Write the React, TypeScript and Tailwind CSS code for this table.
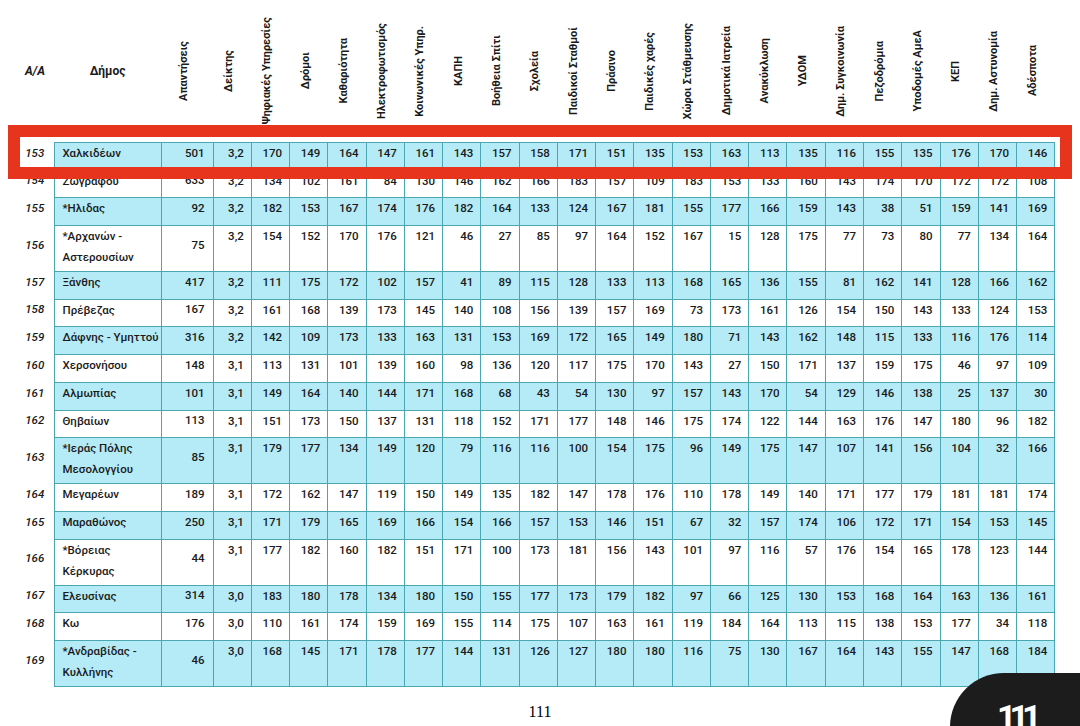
const columns = [
  "Απαντήσεις",
  "Δείκτης",
  "Ψηφιακές Υπηρεσίες",
  "Δρόμοι",
  "Καθαριότητα",
  "Ηλεκτροφωτισμός",
  "Κοινωνικές Υπηρ.",
  "ΚΑΠΗ",
  "Βοήθεια Σπίτι",
  "Σχολεία",
  "Παιδικοί Σταθμοί",
  "Πράσινο",
  "Παιδικές χαρές",
  "Χώροι Στάθμευσης",
  "Δημοτικά Ιατρεία",
  "Ανακύκλωση",
  "ΥΔΟΜ",
  "Δημ. Συγκοινωνία",
  "Πεζοδρόμια",
  "Υποδομές ΑμεΑ",
  "ΚΕΠ",
  "Δημ. Αστυνομία",
  "Αδέσποτα",
];

type Row = {
  readonly aa: number;
  readonly name: readonly string[];
  readonly answers: number;
  readonly index: string;
  readonly scores: string;
};

const rows: readonly Row[] = [
  { aa: 153, name: ["Χαλκιδέων"], answers: 501, index: "3,2", scores: "170 149 164 147 161 143 157 158 171 151 135 153 163 113 135 116 155 135 176 170 146" },
  { aa: 154, name: ["Ζωγράφου"], answers: 633, index: "3,2", scores: "134 102 161 84 130 146 162 166 183 157 109 183 153 133 160 143 174 170 172 172 108" },
  { aa: 155, name: ["*Ηλιδας"], answers: 92, index: "3,2", scores: "182 153 167 174 176 182 164 133 124 167 181 155 177 166 159 143 38 51 159 141 169" },
  { aa: 156, name: ["*Αρχανών -", "Αστερουσίων"], answers: 75, index: "3,2", scores: "154 152 170 176 121 46 27 85 97 164 152 167 15 128 175 77 73 80 77 134 164" },
  { aa: 157, name: ["Ξάνθης"], answers: 417, index: "3,2", scores: "111 175 172 102 157 41 89 115 128 133 113 168 165 136 155 81 162 141 128 166 162" },
  { aa: 158, name: ["Πρέβεζας"], answers: 167, index: "3,2", scores: "161 168 139 173 145 140 108 156 139 157 169 73 173 161 126 154 150 143 133 124 153" },
  { aa: 159, name: ["Δάφνης - Υμηττού"], answers: 316, index: "3,2", scores: "142 109 173 133 163 131 153 169 172 165 149 180 71 143 162 148 115 133 116 176 114" },
  { aa: 160, name: ["Χερσονήσου"], answers: 148, index: "3,1", scores: "113 131 101 139 160 98 136 120 117 175 170 143 27 150 171 137 159 175 46 97 109" },
  { aa: 161, name: ["Αλμωπίας"], answers: 101, index: "3,1", scores: "149 164 140 144 171 168 68 43 54 130 97 157 143 170 54 129 146 138 25 137 30" },
  { aa: 162, name: ["Θηβαίων"], answers: 113, index: "3,1", scores: "151 173 150 137 131 118 152 171 177 148 146 175 174 122 144 163 176 147 180 96 182" },
  { aa: 163, name: ["*Ιεράς Πόλης", "Μεσολογγίου"], answers: 85, index: "3,1", scores: "179 177 134 149 120 79 116 116 100 154 175 96 149 175 147 107 141 156 104 32 166" },
  { aa: 164, name: ["Μεγαρέων"], answers: 189, index: "3,1", scores: "172 162 147 119 150 149 135 182 147 178 176 110 178 149 140 171 177 179 181 181 174" },
  { aa: 165, name: ["Μαραθώνος"], answers: 250, index: "3,1", scores: "171 179 165 169 166 154 166 157 153 146 151 67 32 157 174 106 172 171 154 153 145" },
  { aa: 166, name: ["*Βόρειας", "Κέρκυρας"], answers: 44, index: "3,1", scores: "177 182 160 182 151 171 100 173 181 156 143 101 97 116 57 176 154 165 178 123 144" },
  { aa: 167, name: ["Ελευσίνας"], answers: 314, index: "3,0", scores: "183 180 178 134 180 150 155 177 173 179 182 97 66 125 130 153 168 164 163 136 161" },
  { aa: 168, name: ["Κω"], answers: 176, index: "3,0", scores: "110 161 174 159 169 155 114 175 107 163 161 119 184 164 113 115 138 153 177 34 118" },
  { aa: 169, name: ["*Ανδραβίδας -", "Κυλλήνης"], answers: 46, index: "3,0", scores: "168 145 171 178 177 144 131 126 127 180 180 116 75 130 167 164 143 155 147 168 184" },
];

const cell = "border border-[#4aa7b2] p-0";

function HeaderLabel({ label }: { readonly label: string }) {
  return (
    <th className="p-0 align-middle font-bold">
      <div className="flex h-[142px] items-center justify-center pr-[7px]">
        <span className="rotate-180 whitespace-nowrap text-[11px] leading-[13px] [writing-mode:vertical-rl]">
          {label}
        </span>
      </div>
    </th>
  );
}

function BodyRow({ row, shaded }: { readonly row: Row; readonly shaded: boolean }) {
  const bg = shaded ? "bg-[#b4ebf7]" : "bg-white";
  const tall = row.name.length > 1;
  return (
    <tr className={tall ? "h-[46px]" : "h-[27.7px]"}>
      <td className="bg-white p-0 pb-[6px] text-center align-middle italic">{row.aa}</td>
      <td className={`${cell} ${bg} pl-[8px] align-top leading-[21px]`}>
        {row.name.map((line) => (
          <div key={line}>{line}</div>
        ))}
      </td>
      <td className={`${cell} ${bg} pb-[6px] pr-[8px] text-right align-middle`}>{row.answers}</td>
      <td className={`${cell} ${bg} pr-[7px] text-right align-top leading-[20px]`}>{row.index}</td>
      {row.scores.split(" ").map((v, i) => (
        <td key={i} className={`${cell} ${bg} pr-[7px] text-right align-top leading-[21px]`}>
          {v}
        </td>
      ))}
    </tr>
  );
}

export default function App() {
  return (
    <div className="relative h-[726px] w-[1080px] overflow-hidden bg-white font-['Roboto',sans-serif] text-[11.5px] font-medium text-[#1a1a1a]">
      <table className="ml-[16px] w-[1039px] table-fixed border-collapse">
        <colgroup>
          <col className="w-[38px]" />
          <col className="w-[107px]" />
          <col className="w-[52px]" />
          {columns.slice(1).map((c) => (
            <col key={c} className="w-[38.27px]" />
          ))}
        </colgroup>
        <thead>
          <tr>
            <th className="p-0 text-center align-middle text-[12px] font-bold italic">A/A</th>
            <th className="p-0 text-center align-middle text-[12px] font-bold">Δήμος</th>
            {columns.map((c) => (
              <HeaderLabel key={c} label={c} />
            ))}
          </tr>
        </thead>
        <tbody>
          {rows.map((r, i) => (
            <BodyRow key={r.aa} row={r} shaded={i % 2 === 0} />
          ))}
        </tbody>
      </table>

      <div className="mt-[15px] text-center font-['Liberation_Serif',serif] text-[16px] font-normal leading-[20px] text-black">
        111
      </div>

      {/* highlight frame drawn over row 153 */}
      <div className="pointer-events-none absolute left-[8px] top-[125px] h-[54px] w-[1064px] border-[12px] border-[#e6351c]" />

      {/* page tab */}
      <div className="absolute left-[950px] top-[673px] flex h-[90px] w-[150px] justify-start rounded-tl-[54px] bg-[#1c1c1c] pl-[47px] pt-[27px]">
        <span className="font-['Roboto',sans-serif] text-[34px] font-bold leading-[34px] tracking-[-7px] text-white">
          111
        </span>
      </div>
    </div>
  );
}
